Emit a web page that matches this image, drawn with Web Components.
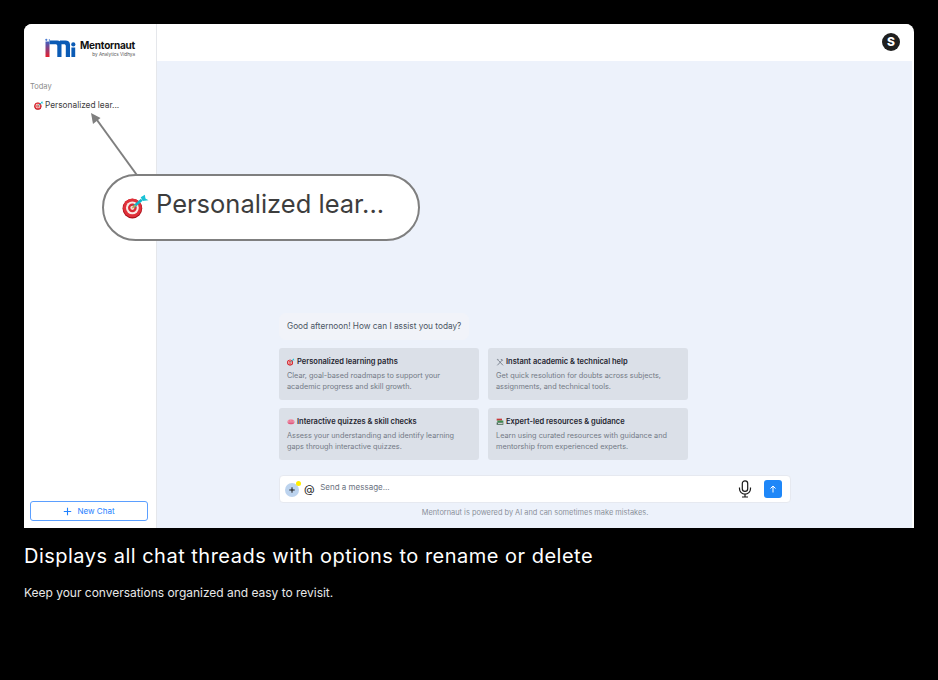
<!DOCTYPE html>
<html lang="en">
<head>
<meta charset="utf-8">
<title>Mentornaut</title>
<style>
    html, body { margin: 0; height: 100%; background: #000; }
    body { font-family: Inter, "Liberation Sans", sans-serif; }
</style>
</head>
<body>
<demo-slide>
    <span slot="title">Displays all chat threads with options to rename or delete</span>
    <span slot="caption">Keep your conversations organized and easy to revisit.</span>
</demo-slide>

<script>
(() => {
    const icons = {
        target: `<svg viewBox="0 0 26 24" width="100%" height="100%">
            <circle cx="10" cy="14" r="9.500" fill="#a90f18"/>
            <circle cx="10" cy="13.300" r="9" fill="#e0313a"/>
            <circle cx="10" cy="13.300" r="6.200" fill="#fbe9e4"/>
            <circle cx="10" cy="13.300" r="4.200" fill="#d92a33"/>
            <circle cx="10" cy="13.300" r="2" fill="#f6d9d2"/>
            <path d="M11 12.500 19 5.500" stroke="#12b5c9" stroke-width="2.600"/>
            <path d="M18 3l2 3.600L25.500 6 22.600 4.400 22 .6z" fill="#19c2d6"/>
            <path d="M10 13.400l3-2.600" stroke="#d9a441" stroke-width="1.400"/>
        </svg>`,
        tools: `<svg viewBox="0 0 12 12" width="100%" height="100%" fill="none" stroke="#6b7280" stroke-width="1.200">
            <path d="M2 11 9 3.500"/><path d="M7 1.500c2 0 3.500 1.200 4 3L9.200 3.400 7.600 3.200z" fill="#6b7280" stroke="none"/>
            <path d="M10.500 11 3.500 3.500"/><path d="M1 2.200 2.500 1l2 2L3.200 4.200z" fill="#8b929c" stroke="none"/>
        </svg>`,
        brain: `<svg viewBox="0 0 12 12" width="100%" height="100%">
            <path d="M.5 6c-.4-2.400 2.200-4.200 5.500-4.200s5.900 1.800 5.500 4.200z" fill="#f08ca4"/>
            <path d="M.5 6.500h11c-.5 1.700-2.200 3-4 3H4.500c-1.800 0-3.500-1.300-4-3z" fill="#e4577c"/>
            <path d="M3.500 3.500c1 .7 1 1.500.5 2.200M7 3c1 .8 1 1.700.4 2.600" fill="none" stroke="#d34a70" stroke-width=".7"/>
        </svg>`,
        books: `<svg viewBox="0 0 12 12" width="100%" height="100%">
            <rect x="1" y="1" width="8" height="2.800" fill="#c63b3b"/>
            <rect x="2" y="3.800" width="9" height="2.800" fill="#3a8f4d"/>
            <rect x="1" y="6.600" width="10" height="3.600" fill="#4a6b58"/>
            <rect x="3" y="7.600" width="7" height="1.300" fill="#dfe4df"/>
        </svg>`
    }

    // little logo, wordmark stays real text
    const logoTemplate = document.createElement("template")
    logoTemplate.innerHTML = `
        <style>
            :host { display: flex; align-items: flex-end; gap: 4px; }
            svg { width: 31px; height: 20px; display: block; flex: none; }
            .words { display: flex; flex-direction: column; align-items: flex-end; }
            .name { font: 700 10px/11px Inter, sans-serif; color: #111; letter-spacing: -0.23px; margin-bottom: 1px; }
            .by { font: 400 4.600px/6px Inter, sans-serif; color: #555; }
        </style>
        <svg viewBox="0 0 31 20">
            <defs>
                <linearGradient id="logoRed" x1="0" y1="0" x2="0" y2="1">
                    <stop offset="0" stop-color="#3f5fc0"/>
                    <stop offset="0.45" stop-color="#8a3f80"/>
                    <stop offset="1" stop-color="#e8202c"/>
                </linearGradient>
            </defs>
            <path d="M.5 19V3.500h4V19z" fill="url(#logoRed)"/>
            <path d="M4.500 2.600h7.800c2.200 0 3.700 1 4.200 2.800V19h-4.200V8c0-1.200-.7-1.700-2-1.700H4.500z" fill="#0b5bb5"/>
            <path d="M15 2.600h5.400c2.800 0 4.600 1.400 4.600 4V19h-4.200V8c0-1.200-.7-1.700-2-1.700h-3.800z" fill="#0b5bb5"/>
            <rect x="26.400" y="9.500" width="3.800" height="9.500" fill="#0b5bb5"/>
            <circle cx="28.300" cy="6.400" r="2.100" fill="#0b5bb5"/>
            <circle cx="1.300" cy="1.800" r="1.100" fill="#4a7bd0"/>
            <circle cx="4.400" cy="2" r=".7" fill="#4a7bd0"/>
        </svg>
        <div class="words">
            <span class="name">Mentornaut</span>
            <span class="by">by Analytics Vidhya</span>
        </div>
    `
    class BrandLogo extends HTMLElement {
        constructor() {
            super()
            this.attachShadow({ mode: "open" }).append(logoTemplate.content.cloneNode(true))
        }
    }
    customElements.define("brand-logo", BrandLogo)

    const sidebarTemplate = document.createElement("template")
    sidebarTemplate.innerHTML = `
        <style>
            :host {
                display: flex;
                flex-direction: column;
                box-sizing: border-box;
                width: 133px;
                flex: none;
                height: 100%;
                background: #fff;
                border-right: 1px solid #e5e7eb;
                padding: 13px 8px 7px 6px;
            }
            brand-logo { margin-left: 15px; height: 21px; }
            .label { margin-top: 24px; font-size: 7.500px; line-height: 10px; color: #8c8c8c; }
            .thread {
                margin: 7px 0 0 4px;
                display: flex;
                align-items: center;
                gap: 1px;
                font-size: 8.300px;
                line-height: 12px;
                color: #3d3d3d;
                white-space: nowrap;
            }
            .thread i { width: 10px; height: 9px; display: block; }
            button {
                margin-top: auto;
                height: 20px;
                box-sizing: border-box;
                border: 1px solid #5b9fff;
                border-radius: 3px;
                background: #fff;
                color: #1e80ff;
                font: 400 8px Inter, sans-serif;
                display: flex;
                align-items: center;
                justify-content: center;
                gap: 5px;
                padding: 0;
            }
            button svg { width: 9px; height: 9px; }
        </style>
        <brand-logo></brand-logo>
        <div class="label">Today</div>
        <div class="thread"><i>${icons.target}</i><span>Personalized lear...</span></div>
        <button>
            <svg viewBox="0 0 9 9" fill="none" stroke="#1e80ff" stroke-width="1.100"><path d="M4.500 .8v7.400M.8 4.500h7.400"/></svg>
            New Chat
        </button>
    `
    class ChatSidebar extends HTMLElement {
        constructor() {
            super()
            this.attachShadow({ mode: "open" }).append(sidebarTemplate.content.cloneNode(true))
        }
    }
    customElements.define("chat-sidebar", ChatSidebar)

    const cardTemplate = document.createElement("template")
    cardTemplate.innerHTML = `
        <style>
            :host {
                display: block;
                box-sizing: border-box;
                height: 52px;
                background: #dbe0e8;
                border-radius: 3px;
                padding: 8px 8px 0 8px;
            }
            .title {
                display: flex;
                align-items: center;
                gap: 2px;
                font-size: 7.500px;
                font-weight: 600;
                line-height: 11px;
                color: #1f2530;
                white-space: nowrap;
            }
            .title i { width: 8px; height: 8px; display: block; flex: none; }
            .text {
                margin-top: 3px;
                font-size: 7.320px;
                line-height: 11px;
                color: #737a86;
                white-space: nowrap;
            }
        </style>
        <div class="title"><i></i><span><slot name="title"></slot></span></div>
        <div class="text"><slot></slot></div>
    `
    class PromptCard extends HTMLElement {
        constructor() {
            super()
            const shadow = this.attachShadow({ mode: "open" })
            shadow.append(cardTemplate.content.cloneNode(true))
            shadow.querySelector("i").innerHTML = icons[this.getAttribute("icon")]
        }
    }
    customElements.define("prompt-card", PromptCard)

    const inputTemplate = document.createElement("template")
    inputTemplate.innerHTML = `
        <style>
            :host {
                display: flex;
                align-items: center;
                box-sizing: border-box;
                height: 28px;
                background: #fff;
                border: 1px solid #e6e9f0;
                border-radius: 4px;
                padding: 0 8px 0 5px;
            }
            .plus {
                position: relative;
                width: 14px;
                height: 14px;
                margin-top: 1px;
                border-radius: 50%;
                background: #bcd3ee;
                display: flex;
                align-items: center;
                justify-content: center;
                flex: none;
            }
            .plus svg { width: 6px; height: 6px; }
            .plus::after {
                content: "";
                position: absolute;
                top: -2px;
                right: -2px;
                width: 5px;
                height: 5px;
                border-radius: 50%;
                background: #ffee00;
            }
            .at { margin-left: 5px; font-size: 11px; color: #222; line-height: 14px; }
            .hint { margin: -4px 0 0 5.500px; font-size: 8px; color: #6b7280; flex: 1; }
            .mic { width: 14px; height: 18px; margin-right: 12px; }
            .send {
                width: 18px;
                height: 18px;
                border-radius: 3px;
                background: #1e87f8;
                display: flex;
                align-items: center;
                justify-content: center;
            }
            .send svg { width: 8px; height: 8px; }
        </style>
        <span class="plus"><svg viewBox="0 0 6 6" fill="none" stroke="#1a1a1a" stroke-width="1"><path d="M3 .3v5.400M.3 3h5.400"/></svg></span>
        <span class="at">@</span>
        <span class="hint">Send a message...</span>
        <svg class="mic" viewBox="0 0 14 18" fill="none" stroke="#1a1a1a" stroke-width="1.200">
            <rect x="4.300" y=".8" width="5.400" height="10.600" rx="2.700"/>
            <path d="M1.500 7.500v1.200a5.500 5.500 0 0 0 11 0V7.500M7 14.200V17M4 17h6"/>
        </svg>
        <span class="send"><svg viewBox="0 0 8 8" fill="none" stroke="#fff" stroke-width="1"><path d="M4 7.500V1M1.500 3.500 4 1l2.500 2.500"/></svg></span>
    `
    class ChatInput extends HTMLElement {
        constructor() {
            super()
            this.attachShadow({ mode: "open" }).append(inputTemplate.content.cloneNode(true))
        }
    }
    customElements.define("chat-input", ChatInput)

    const mainTemplate = document.createElement("template")
    mainTemplate.innerHTML = `
        <style>
            :host {
                display: flex;
                flex-direction: column;
                flex: 1;
                min-width: 0;
                height: 100%;
            }
            header {
                height: 37px;
                flex: none;
                box-sizing: border-box;
                background: #fff;
                display: flex;
                align-items: center;
                justify-content: flex-end;
                padding: 0 12px 1px 0;
            }
            .avatar {
                width: 18px;
                height: 18px;
                border-radius: 50%;
                background: #1f1f1f;
                color: #fff;
                font-size: 12px;
                font-weight: 800;
                line-height: 18px;
                text-align: center;
            }
            .body {
                flex: 1;
                display: flex;
                flex-direction: column;
                justify-content: flex-end;
                background: #edf2fb;
                padding: 0 0 10px 122px;
            }
            .greeting {
                align-self: flex-start;
                width: 190px;
                height: 27px;
                box-sizing: border-box;
                background: #f1f3f9;
                border-radius: 7px;
                padding: 0 8px;
                font-size: 8.260px;
                line-height: 26px;
                color: #4b5563;
                white-space: nowrap;
            }
            .cards {
                display: grid;
                grid-template-columns: 200px 200px;
                gap: 8px 9px;
                margin-top: 8px;
            }
            chat-input { width: 512px; margin-top: 15px; }
            .note {
                width: 512px;
                margin-top: 4px;
                text-align: center;
                font-size: 7.400px;
                line-height: 11px;
                color: #8a909a;
            }
        </style>
        <header><div class="avatar">S</div></header>
        <div class="body">
            <div class="greeting">Good afternoon! How can I assist you today?</div>
            <div class="cards">
                <prompt-card icon="target">
                    <span slot="title">Personalized learning paths</span>
                    Clear, goal-based roadmaps to support your<br>academic progress and skill growth.
                </prompt-card>
                <prompt-card icon="tools">
                    <span slot="title">Instant academic &amp; technical help</span>
                    Get quick resolution for doubts across subjects,<br>assignments, and technical tools.
                </prompt-card>
                <prompt-card icon="brain">
                    <span slot="title">Interactive quizzes &amp; skill checks</span>
                    Assess your understanding and identify learning<br>gaps through interactive quizzes.
                </prompt-card>
                <prompt-card icon="books">
                    <span slot="title">Expert-led resources &amp; guidance</span>
                    Learn using curated resources with guidance and<br>mentorship from experienced experts.
                </prompt-card>
            </div>
            <chat-input></chat-input>
            <div class="note">Mentornaut is powered by AI and can sometimes make mistakes.</div>
        </div>
    `
    class ChatMain extends HTMLElement {
        constructor() {
            super()
            this.attachShadow({ mode: "open" }).append(mainTemplate.content.cloneNode(true))
        }
    }
    customElements.define("chat-main", ChatMain)

    // zoomed callout + arrow lying over the app
    const calloutTemplate = document.createElement("template")
    calloutTemplate.innerHTML = `
        <style>
            :host { position: absolute; left: 66px; top: 80px; width: 320px; height: 140px; }
            svg.arrow { position: absolute; left: 0; top: 0; width: 60px; height: 76px; overflow: visible; }
            .pill {
                position: absolute;
                left: 12px;
                top: 70px;
                width: 318px;
                height: 67px;
                box-sizing: border-box;
                background: #fff;
                border: 2px solid #7f7f7f;
                border-radius: 34px;
                display: flex;
                align-items: center;
                padding: 0 0 8px 18px;
                gap: 7px;
                font-size: 25.500px;
                color: #3d3d3d;
                white-space: nowrap;
            }
            .pill i { width: 27px; height: 25px; display: block; margin-top: 5px; flex: none; }
        </style>
        <svg class="arrow" viewBox="0 0 60 76">
            <path d="M46.500 70.500 7 16" stroke="#7f7f7f" stroke-width="2" fill="none"/>
            <path d="M1 9 10.500 14 3 20z" fill="#7f7f7f"/>
        </svg>
        <div class="pill"><i>${icons.target}</i><span>Personalized lear...</span></div>
    `
    class ThreadCallout extends HTMLElement {
        constructor() {
            super()
            this.attachShadow({ mode: "open" }).append(calloutTemplate.content.cloneNode(true))
        }
    }
    customElements.define("thread-callout", ThreadCallout)

    const slideTemplate = document.createElement("template")
    slideTemplate.innerHTML = `
        <style>
            :host {
                display: block;
                box-sizing: border-box;
                height: 680px;
                padding: 24px 24px 0;
                background: #000;
            }
            .window {
                position: relative;
                display: flex;
                width: 890px;
                height: 504px;
                overflow: hidden;
                border-radius: 8px 8px 0 0;
                border-right: 2px solid #fff;
                box-sizing: border-box;
                background: #fff;
            }
            h1 {
                margin: 16px 0 0;
                font-size: 20px;
                font-weight: 400;
                line-height: 24px;
                color: #fff;
                letter-spacing: .49px;
            }
            p {
                margin: 17px 0 0;
                font-size: 12px;
                line-height: 16px;
                color: #e8e8e8;
                letter-spacing: -.02px;
            }
        </style>
        <div class="window">
            <chat-sidebar></chat-sidebar>
            <chat-main></chat-main>
            <thread-callout></thread-callout>
        </div>
        <h1><slot name="title"></slot></h1>
        <p><slot name="caption"></slot></p>
    `
    class DemoSlide extends HTMLElement {
        constructor() {
            super()
            this.attachShadow({ mode: "open" }).append(slideTemplate.content.cloneNode(true))
        }
    }
    customElements.define("demo-slide", DemoSlide)
})()
</script>
</body>
</html>
